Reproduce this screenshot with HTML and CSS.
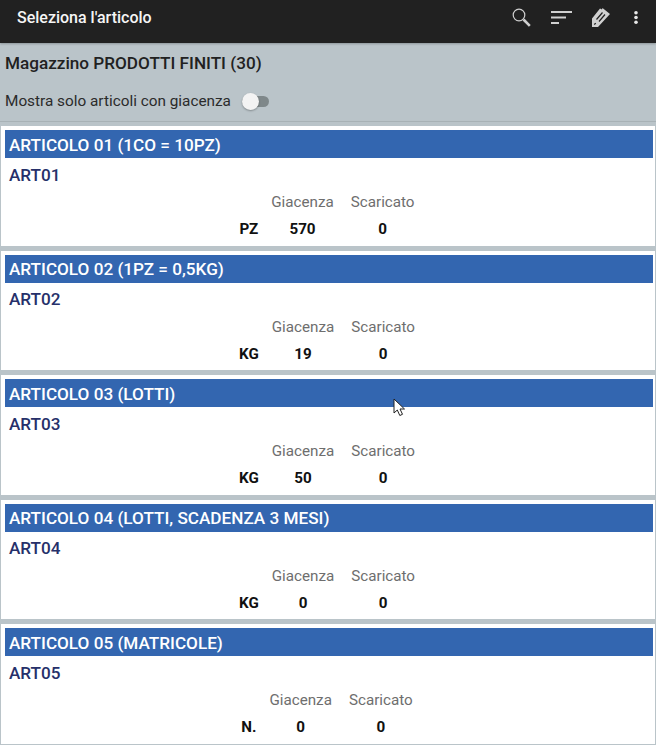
FILE: index.html
```html
<!DOCTYPE html>
<html lang="it">
<head>
<meta charset="utf-8">
<title>Seleziona l'articolo</title>
<link rel="stylesheet" href="styles.css">
</head>
<body>
<header class="toolbar">
  <h1 class="toolbar-title">Seleziona l'articolo</h1>
  <div class="toolbar-actions">
    <svg class="icon icon-search" width="19" height="19" viewBox="0 0 19 19"><circle cx="7" cy="7" r="5.8" fill="none" stroke="#d0d0d0" stroke-width="1.2"/><path d="M11.5 11.5L17.8 17.8" stroke="#d0d0d0" stroke-width="2.6"/></svg>
    <svg class="icon icon-sort" width="21" height="13" viewBox="0 0 21 13"><path d="M0 1H21M0 6.5H15M0 12H8" stroke="#d0d0d0" stroke-width="2"/></svg>
    <svg class="icon icon-edit" width="18" height="19" viewBox="0 0 18 19"><path d="M0 19V10.5L8 0.5L10 1.5L10.5 0L18 6L6 19Z" fill="#d0d0d0"/><path d="M4.5 11.5L10.5 4.5M7 13.5L13 6.5M2.2 16.5L3.8 15.2" stroke="#212121" stroke-width="1.2" fill="none"/></svg>
    <svg class="icon icon-more" width="4" height="13" viewBox="0 0 4 13"><circle cx="2" cy="1.8" r="1.8" fill="#e8e8e8"/><circle cx="2" cy="6.5" r="1.8" fill="#e8e8e8"/><circle cx="2" cy="11.2" r="1.8" fill="#e8e8e8"/></svg>
  </div>
</header>
<section class="filter-panel">
  <h2 class="warehouse">Magazzino PRODOTTI FINITI (30)</h2>
  <div class="filter-row">
    <span>Mostra solo articoli con giacenza</span>
    <span class="switch"><span class="switch-thumb"></span></span>
  </div>
  <hr class="panel-rule">
</section>
<main class="list">
  <article class="card">
    <div class="card-title">ARTICOLO 01 (1CO = 10PZ)</div>
    <div class="card-code">ART01</div>
    <div class="stock"><span></span><span class="stock-head">Giacenza</span><span class="stock-head">Scaricato</span><b class="stock-unit">PZ</b><b class="stock-val">570</b><b class="stock-val">0</b></div>
  </article>
  <article class="card">
    <div class="card-title">ARTICOLO 02 (1PZ = 0,5KG)</div>
    <div class="card-code">ART02</div>
    <div class="stock"><span></span><span class="stock-head">Giacenza</span><span class="stock-head">Scaricato</span><b class="stock-unit">KG</b><b class="stock-val">19</b><b class="stock-val">0</b></div>
  </article>
  <article class="card">
    <div class="card-title">ARTICOLO 03 (LOTTI)</div>
    <div class="card-code">ART03</div>
    <div class="stock"><span></span><span class="stock-head">Giacenza</span><span class="stock-head">Scaricato</span><b class="stock-unit">KG</b><b class="stock-val">50</b><b class="stock-val">0</b></div>
  </article>
  <article class="card">
    <div class="card-title">ARTICOLO 04 (LOTTI, SCADENZA 3 MESI)</div>
    <div class="card-code">ART04</div>
    <div class="stock"><span></span><span class="stock-head">Giacenza</span><span class="stock-head">Scaricato</span><b class="stock-unit">KG</b><b class="stock-val">0</b><b class="stock-val">0</b></div>
  </article>
  <article class="card">
    <div class="card-title">ARTICOLO 05 (MATRICOLE)</div>
    <div class="card-code">ART05</div>
    <div class="stock"><span></span><span class="stock-head">Giacenza</span><span class="stock-head">Scaricato</span><b class="stock-unit">N.</b><b class="stock-val">0</b><b class="stock-val">0</b></div>
  </article>
</main>
<svg class="cursor" width="14" height="20" viewBox="0 0 14 20"><path d="M1 1V15L4.3 12L6.8 17.5L9.5 16.3L7 11H11.5Z" fill="#fff" stroke="#222" stroke-width="1"/></svg>
</body>
</html>
```
FILE: styles.css
```css
* { box-sizing: border-box; }
html, body { margin: 0; height: 745px; overflow: hidden; }
body { font-family: Roboto, sans-serif; background: #fff; color: #212121; position: relative; }
.toolbar { height: 43px; background: #212121; display: flex; align-items: center; justify-content: space-between; padding: 0 18px 8px 17px; box-shadow: 0 1px 2px rgba(0,0,0,.25); position: relative; }
.toolbar-title { margin: 0; font-size: 16px; font-weight: 500; color: #f5f5f5; line-height: 20px; }
.toolbar-actions { display: flex; align-items: center; gap: 20px; }
.icon-more { margin-left: 4px; }
.icon { display: block; }
.filter-panel { height: 83px; background: #bac4c9; padding: 9px 5px 0; }
.warehouse { margin: 0; font-size: 17.15px; font-weight: 500; line-height: 22px; color: #212121; }
.filter-row { display: flex; align-items: center; gap: 11px; margin-top: 16px; height: 22px; font-size: 15.33px; color: #2b2b2b; }
.switch { width: 27px; height: 11px; border-radius: 6px; background: #7f888a; position: relative; display: block; }
.switch-thumb { position: absolute; left: 0; top: -3px; width: 17px; height: 17px; border-radius: 50%; background: #f3f3f3; box-shadow: 0 1px 2px rgba(0,0,0,.3); }
.panel-rule { margin: 9px -5px 0; border: 0; height: 1px; background: #a8b2b6; }
.card { height: 124.5px; padding: 4px 2px 0 4px; background: #fff; border-left: 1px solid #bac4c9; border-right: 1px solid #bac4c9; border-bottom: 5px solid #bac4c9; position: relative; }
.card-title { height: 28px; line-height: 28px; padding-top: 0.7px; background: #3366b0; color: #fff; font-size: 17.15px; font-weight: 500; padding-left: 4px; }
.card-code { margin-top: 6.8px; padding-left: 4px; font-size: 17.15px; line-height: 20px; font-weight: 500; color: #26306a; }
.stock { display: grid; grid-template-columns: auto auto auto; width: max-content; margin: 8.6px auto 0; padding-right: 4px; row-gap: 9px; font-size: 15.2px; text-align: center; line-height: 18px; }
.stock-head { color: #6e6e6e; padding: 0 0 0 13px; }
.stock-head + .stock-head { padding-left: 17px; }
.stock-unit { color: #111; text-align: right; font-weight: 700; }
.stock-val { color: #111; font-weight: 700; padding-left: 13px; }
.stock-val + .stock-val { padding-left: 17px; }
.cursor { position: absolute; left: 393px; top: 398px; }
```
